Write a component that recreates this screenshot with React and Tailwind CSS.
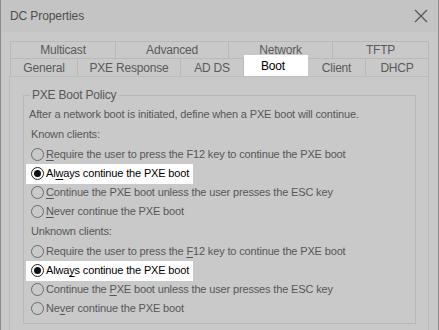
import React from 'react';

const topTabs = [
  { label: 'Multicast', w: 'w-[106px]' },
  { label: 'Advanced', w: 'w-[114px]' },
  { label: 'Network', w: 'w-[105px]' },
  { label: 'TFTP', w: 'flex-1' },
];

const bottomTabs = [
  { label: 'General', w: 'w-[68px]' },
  { label: 'PXE Response', w: 'w-[104px]' },
  { label: 'AD DS', w: 'w-[64px]' },
  { label: 'Boot', w: 'w-[64px]', active: true },
  { label: 'Client', w: 'w-[59px]' },
  { label: 'DHCP', w: 'flex-1' },
];

function Radio({ checked }) {
  return (
    <span
      className={`w-[13px] h-[13px] rounded-full border shrink-0 flex items-center justify-center ${
        checked ? 'border-[#222] bg-white' : 'border-[#6a6a6a]'
      }`}
    >
      {checked && <span className="w-[7px] h-[7px] rounded-full bg-[#111]" />}
    </span>
  );
}

function Option({ children, checked }) {
  if (checked) {
    return (
      <div className="h-[19px] flex items-center">
        <div className="-ml-[5px] pl-[5px] pr-[4px] h-[20px] bg-white flex items-center gap-[2px] text-black">
          <Radio checked />
          <span>{children}</span>
        </div>
      </div>
    );
  }
  return (
    <div className="h-[19px] flex items-center gap-[2px]">
      <Radio />
      <span>{children}</span>
    </div>
  );
}

function U({ children }) {
  return <span className="underline underline-offset-2">{children}</span>;
}

export default function App() {
  return (
    <div
      className="w-[439px] h-[330px] bg-[#c9c9c9] border-l border-r border-[#8a8a8a] overflow-hidden text-[11px] tracking-[-0.15px] text-[#575757]"
      style={{ fontFamily: '"Liberation Sans", Arial, sans-serif' }}
    >
      {/* title bar */}
      <div className="h-[32px] bg-[#c4c4c4] flex items-center justify-between pl-[9px] pr-[8px]">
        <span className="text-[12px] tracking-[-0.1px] text-[#4e4e4e]">DC Properties</span>
        <svg width="14" height="14" viewBox="0 0 14 14" className="mr-[2px]">
          <path d="M1 1 L13 13 M13 1 L1 13" stroke="#555" strokeWidth="1.2" fill="none" />
        </svg>
      </div>

      <div className="pt-[9px] pl-[8px] pr-[9px]">
        {/* tabs */}
        <div className="flex h-[17px] ml-[1px] text-[12px] tracking-[-0.2px]">
          {topTabs.map((t) => (
            <div
              key={t.label}
              className={`${t.w} border border-b-0 border-[#b9b9b9] -ml-px first:ml-0 flex items-center justify-center text-[#5a5a5a]`}
            >
              {t.label}
            </div>
          ))}
        </div>
        <div className="flex h-[18px] ml-[1px] items-end text-[12px] tracking-[-0.2px]">
          {bottomTabs.map((t) =>
            t.active ? (
              <div
                key={t.label}
                className={`${t.w} h-[21px] bg-white -mt-[3px] flex items-center pl-[17px] text-black relative z-10`}
              >
                {t.label}
              </div>
            ) : (
              <div
                key={t.label}
                className={`${t.w} h-[18px] border border-b-0 border-[#b9b9b9] -ml-px first:ml-0 flex items-center justify-center text-[#5a5a5a]`}
              >
                {t.label}
              </div>
            )
          )}
        </div>

        {/* panel */}
        <div className="border border-[#bcbcbc] bg-[#c9c9c9] h-[260px] pt-[18px] pl-[13px] pr-[12px]">
          <div className="relative border border-[#b8b8b8] h-[229px] pt-[8px] pl-[5px]">
            <span className="absolute -top-[8px] left-[6px] px-[2px] bg-[#c9c9c9] leading-[14px] text-[12px] tracking-[-0.2px]">
              PXE Boot Policy
            </span>
            <div className="h-[20px] flex items-center">
              After a network boot is initiated, define when a PXE boot will continue.
            </div>
            <div className="h-[21px] flex items-center pl-[2px]">Known clients:</div>
            <div className="pl-[2px]">
              <Option>
                <U>R</U>equire the user to press the F12 key to continue the PXE boot
              </Option>
              <Option checked>
                Al<U>w</U>ays continue the PXE boot
              </Option>
              <Option>
                <U>C</U>ontinue the PXE boot unless the user presses the ESC key
              </Option>
              <Option>
                <U>N</U>ever continue the PXE boot
              </Option>
            </div>
            <div className="h-[21px] flex items-center pl-[2px]">Unknown clients:</div>
            <div className="pl-[2px]">
              <Option>
                Require the user to press the <U>F</U>12 key to continue the PXE boot
              </Option>
              <Option checked>
                Alwa<U>y</U>s continue the PXE boot
              </Option>
              <Option>
                Continue the <U>P</U>XE boot unless the user presses the ESC key
              </Option>
              <Option>
                Ne<U>v</U>er continue the PXE boot
              </Option>
            </div>
          </div>
        </div>
      </div>
    </div>
  );
}
